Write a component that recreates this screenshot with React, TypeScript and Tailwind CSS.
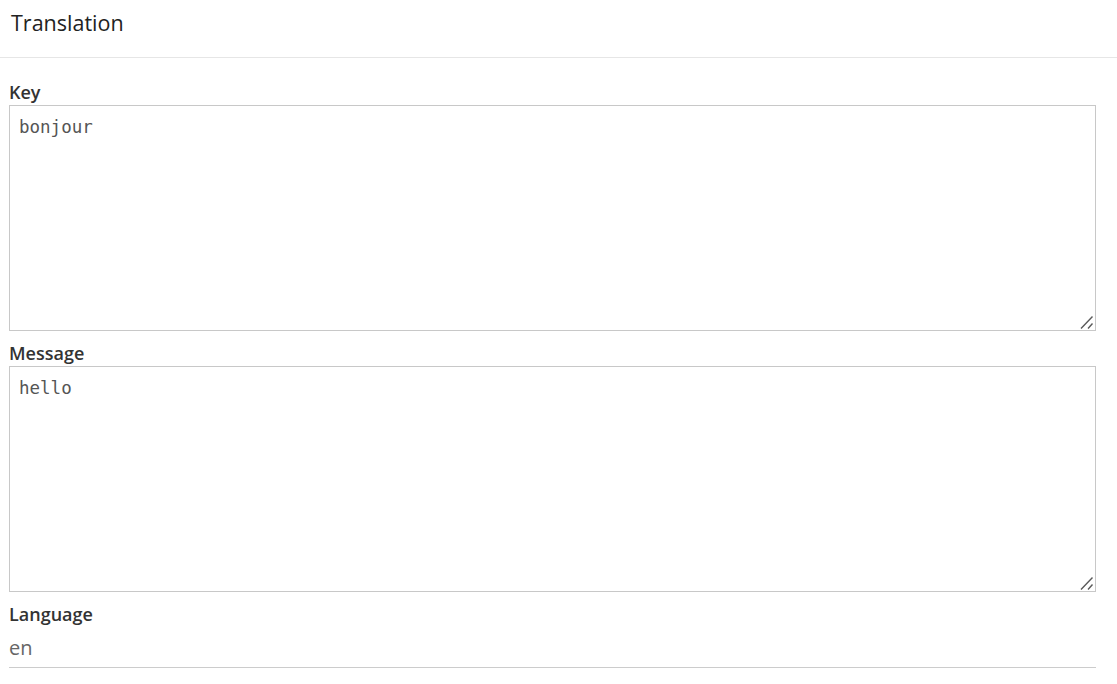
import React from 'react'

const ResizeGrip = () => (
    <svg
        className="pointer-events-none absolute bottom-0 right-0"
        width="18"
        height="18"
        viewBox="0 0 18 18"
    >
        <path d="M3 15.5 L14.5 3.5 M10 15.5 L14.5 10.5" stroke="#5a5a5a" strokeWidth="1.4" fill="none" />
    </svg>
)

const Field = ({ label, value }: { label: string; value: string }) => (
    <div className="flex flex-col">
        <label className="mt-[10px] leading-[25px] text-[18px] font-semibold text-[#333]">
            {label}
        </label>
        <div className="relative h-[226px]">
            <textarea
                defaultValue={value}
                className="block h-full w-full resize-none border border-[#c8c8c8] px-[9px] py-[8px] font-['DejaVu_Sans_Mono',monospace] text-[17.5px] text-[#555] outline-none"
            />
            <ResizeGrip />
        </div>
    </div>
)

export default function App() {
    return (
        <div className="min-h-screen bg-white font-['Open_Sans',sans-serif]">
            <div className="h-[58px] border-b border-[#e6e6e6] px-[11px] pt-[8px]">
                <h3 className="text-[21.5px] leading-[30px] text-[#222]">Translation</h3>
            </div>
            <div className="w-[1096px] pl-[9px] pt-[12px]">
                <Field label="Key" value="bonjour" />
                <Field label="Message" value="hello" />
                <div className="flex flex-col">
                    <label className="mt-[10px] leading-[25px] text-[18px] font-semibold text-[#333]">
                        Language
                    </label>
                    <div className="border-b border-[#ccc] pt-[6px] pb-[4px] text-[20px] leading-[30px] text-[#666]">
                        en
                    </div>
                </div>
            </div>
        </div>
    )
}
